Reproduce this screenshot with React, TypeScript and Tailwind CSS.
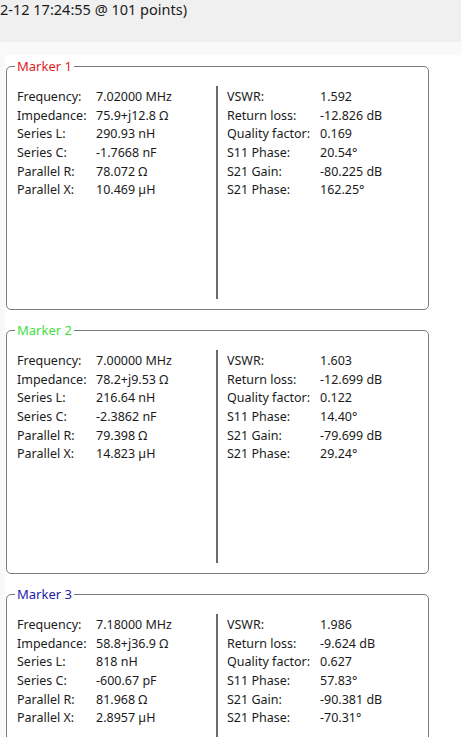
const markers = [
  {
    name: "Marker 1",
    color: "text-[#e01b1b]",
    left: [
      ["Frequency:", "7.02000 MHz"],
      ["Impedance:", "75.9+j12.8 Ω"],
      ["Series L:", "290.93 nH"],
      ["Series C:", "-1.7668 nF"],
      ["Parallel R:", "78.072 Ω"],
      ["Parallel X:", "10.469 µH"],
    ],
    right: [
      ["VSWR:", "1.592"],
      ["Return loss:", "-12.826 dB"],
      ["Quality factor:", "0.169"],
      ["S11 Phase:", "20.54°"],
      ["S21 Gain:", "-80.225 dB"],
      ["S21 Phase:", "162.25°"],
    ],
  },
  {
    name: "Marker 2",
    color: "text-[#3fe03f]",
    left: [
      ["Frequency:", "7.00000 MHz"],
      ["Impedance:", "78.2+j9.53 Ω"],
      ["Series L:", "216.64 nH"],
      ["Series C:", "-2.3862 nF"],
      ["Parallel R:", "79.398 Ω"],
      ["Parallel X:", "14.823 µH"],
    ],
    right: [
      ["VSWR:", "1.603"],
      ["Return loss:", "-12.699 dB"],
      ["Quality factor:", "0.122"],
      ["S11 Phase:", "14.40°"],
      ["S21 Gain:", "-79.699 dB"],
      ["S21 Phase:", "29.24°"],
    ],
  },
  {
    name: "Marker 3",
    color: "text-[#1c1ca8]",
    left: [
      ["Frequency:", "7.18000 MHz"],
      ["Impedance:", "58.8+j36.9 Ω"],
      ["Series L:", "818 nH"],
      ["Series C:", "-600.67 pF"],
      ["Parallel R:", "81.968 Ω"],
      ["Parallel X:", "2.8957 µH"],
    ],
    right: [
      ["VSWR:", "1.986"],
      ["Return loss:", "-9.624 dB"],
      ["Quality factor:", "0.627"],
      ["S11 Phase:", "57.83°"],
      ["S21 Gain:", "-90.381 dB"],
      ["S21 Phase:", "-70.31°"],
    ],
  },
];

function Rows({ rows, labelWidth }: { rows: string[][]; labelWidth: string }) {
  return (
    <div className="flex flex-col pt-[2px]">
      {rows.map(([label, value]) => (
        <div key={label} className="flex h-[18.7px] items-center whitespace-nowrap">
          <span className={labelWidth}>{label}</span>
          <span>{value}</span>
        </div>
      ))}
    </div>
  );
}

export default function App() {
  return (
    <div className="h-[737px] w-[461px] overflow-hidden bg-[#f9f9f9] font-['Noto_Sans',sans-serif] text-[#1b1b1b]">
      <div className="h-[42px] bg-[#f0f0f0] text-[14.5px] leading-[18px]">
        2-12 17:24:55 @ 101 points)
      </div>
      <div className="ml-[5px] mt-[13px] flex flex-col gap-[13px] bg-white pl-[1px] pt-[4px] text-[12.5px]">
        {markers.map((m) => (
          <fieldset
            key={m.name}
            className="h-[251px] w-[423px] rounded-[5px] border border-[#7a7a7a] pb-[10px] pl-[10px]"
          >
            <legend className={`-ml-[2px] px-[2px] text-[13px] leading-[14px] ${m.color}`}>
              {m.name}
            </legend>
            <div className="mt-[13px] flex h-[213px]">
              <div className="w-[199px]">
                <Rows rows={m.left} labelWidth="w-[79px]" />
              </div>
              <div className="border-l-2 border-[#6b6b6b] pl-[9px]">
                <Rows rows={m.right} labelWidth="w-[93px]" />
              </div>
            </div>
          </fieldset>
        ))}
      </div>
    </div>
  );
}
